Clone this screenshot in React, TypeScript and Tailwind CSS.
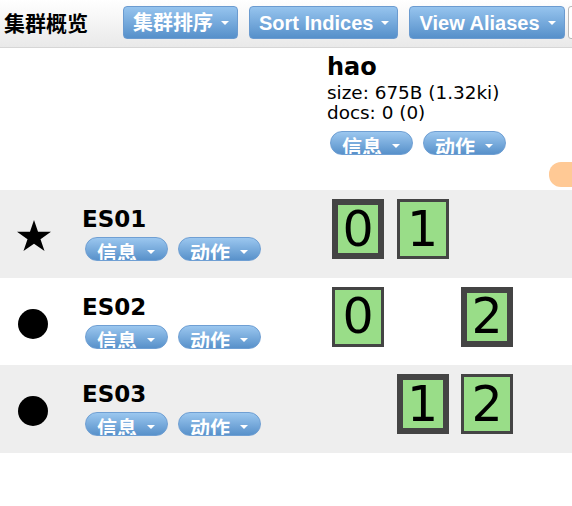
type Shard = { n: number; primary: boolean };

interface NodeRow {
  name: string;
  master: boolean;
  bg: string;
  shards: Shard[];
}

const nodes: NodeRow[] = [
  { name: "ES01", master: true, bg: "bg-[#eeeeee]", shards: [{ n: 0, primary: true }, { n: 1, primary: false }] },
  { name: "ES02", master: false, bg: "bg-white", shards: [{ n: 0, primary: false }, { n: 2, primary: true }] },
  { name: "ES03", master: false, bg: "bg-[#eeeeee]", shards: [{ n: 1, primary: true }, { n: 2, primary: false }] },
];

// grid column per shard number
const colStart = ["col-start-1", "col-start-2", "col-start-3"];

function Caret({ big }: { big?: boolean }) {
  return big ? (
    <span className="inline-block w-0 h-0 border-l-[4.5px] border-r-[4.5px] border-t-[4.5px] border-l-transparent border-r-transparent border-t-white" />
  ) : (
    <span className="inline-block w-0 h-0 border-l-[4px] border-r-[4px] border-t-[4px] border-l-transparent border-r-transparent border-t-white" />
  );
}

function TopButton({ label }: { label: string }) {
  return (
    <div className="flex items-center gap-[8px] h-[33px] pl-[9px] pr-[8px] rounded-[4px] border border-[#6b9bd0] bg-gradient-to-b from-[#96c4ee] to-[#5690ca] text-white font-bold text-[20px] leading-none font-['Liberation_Sans','Noto_Sans_CJK_SC',sans-serif]">
      <span>{label}</span>
      <Caret />
    </div>
  );
}

function Pill({ label }: { label: string }) {
  return (
    <div className="w-[83px] h-[24px] shrink-0 flex items-start pl-[11px] pt-[5px] gap-[10px] overflow-hidden rounded-full border border-[#6f9fd3] bg-gradient-to-b from-[#9bc7ef] to-[#5891ca] text-white font-bold text-[20px] leading-[20px] font-['Noto_Sans_CJK_SC',sans-serif]">
      <span className="shrink-0">{label}</span>
      <span className="mt-[7px] flex">
        <Caret big />
      </span>
    </div>
  );
}

function Star() {
  return (
    <svg width="34" height="31" viewBox="0 0 34 32.4" preserveAspectRatio="none">
      <polygon
        points="17,0 21.02,12.37 34,12.37 23.5,20.01 27.52,32.38 17,24.74 6.48,32.38 10.5,20.01 0,12.37 12.98,12.37"
        fill="#000"
      />
    </svg>
  );
}

function Dot() {
  return (
    <svg width="30" height="30" viewBox="0 0 30 30" className="mt-[1px] -ml-[2px]">
      <circle cx="15" cy="15" r="15" fill="#000" />
    </svg>
  );
}

function ShardBox({ shard }: { shard: Shard }) {
  return (
    <div
      className={`${colStart[shard.n]} w-[52px] h-[60px] flex items-center justify-center bg-[#99dd88] border-[#444444] ${
        shard.primary ? "border-[6px]" : "border-[3px]"
      } text-[49px] leading-none`}
    >
      {shard.n}
    </div>
  );
}

export default function App() {
  return (
    <div className="w-[572px] h-[506px] overflow-hidden bg-white text-black font-['DejaVu_Sans','Noto_Sans_CJK_SC',sans-serif]">
      {/* Top toolbar */}
      <div className="h-[48px] flex items-center pl-[4px] border-b border-[#d6d6d6] bg-gradient-to-b from-white to-[#e9e9e9] overflow-hidden">
        <div className="shrink-0 -mt-[2px] text-[21px] font-bold leading-none font-['Noto_Sans_CJK_SC',sans-serif]">集群概览</div>
        <div className="shrink-0 flex gap-[11px] ml-[35px] -mt-[2px]">
          <TopButton label="集群排序" />
          <TopButton label="Sort Indices" />
          <TopButton label="View Aliases" />
        </div>
        <div className="shrink-0 ml-[3px] -mt-[2px] w-[20px] h-[33px] rounded-l-[3px] border border-[#b8b8b8] bg-white" />
      </div>

      {/* Index header */}
      <div className="flex h-[142px]">
        <div className="w-[327px] shrink-0" />
        <div className="w-[222px] shrink-0 pt-[5px]">
          <div className="text-[24px] font-bold leading-[28px]">hao</div>
          <div className="mt-[2px] text-[18.4px] leading-[20px]">size: 675B (1.32ki)</div>
          <div className="text-[18.4px] leading-[20px]">docs: 0 (0)</div>
          <div className="flex gap-[10px] mt-[8px] ml-[3px]">
            <Pill label="信息" />
            <Pill label="动作" />
          </div>
        </div>
        <div className="shrink-0 pt-[114px]">
          <div className="w-[40px] h-[25px] rounded-l-[12px] bg-[#ffc995]" />
        </div>
      </div>

      {/* Node rows */}
      {nodes.map((node) => (
        <div key={node.name} className={`flex h-[87.5px] ${node.bg}`}>
          <div className="w-[68px] shrink-0 flex justify-center items-start pt-[30px]">
            {node.master ? <Star /> : <Dot />}
          </div>
          <div className="w-[259px] shrink-0 pl-[14px] pt-[15px]">
            <div className="text-[23px] font-bold leading-[28px]">{node.name}</div>
            <div className="flex gap-[10px] mt-[4px] ml-[3px]">
              <Pill label="信息" />
              <Pill label="动作" />
            </div>
          </div>
          <div className="shrink-0 pl-[5px] pt-[9px]">
            <div className="grid grid-cols-[52px_52px_52px] gap-x-[12.5px]">
              {node.shards.map((s) => (
                <ShardBox key={s.n} shard={s} />
              ))}
            </div>
          </div>
        </div>
      ))}
    </div>
  );
}
